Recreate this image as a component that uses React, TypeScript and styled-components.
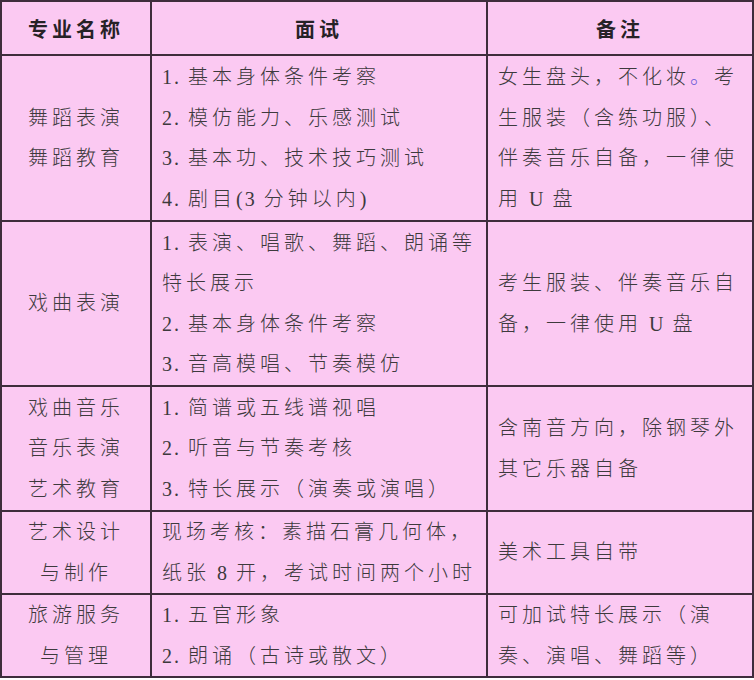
import React from "react";
import styled, { createGlobalStyle } from "styled-components";

const Global = createGlobalStyle`
  html, body { margin: 0; padding: 0; background: #ffffff; }
  body {
    font-family: "Liberation Serif", "Noto Sans CJK SC", serif;
  }
`;

const Table = styled.table`
  border-collapse: collapse;
  width: 752px;
  table-layout: fixed;
  background: #fbc9f2;
  border: 2px solid #3e2c3c;
  margin: 0;
`;

const HeadCell = styled.th`
  height: 52px;
  padding: 0;
  border: 2px solid #3e2c3c;
  font-family: "Liberation Serif", "Noto Sans CJK SC", serif;
  font-size: 20px;
  font-weight: 700;
  letter-spacing: 4px;
  color: #262226;
  text-align: center;
  vertical-align: middle;
`;

const Cell = styled.td<{ $center?: boolean; $h: number }>`
  height: ${(p) => p.$h}px;
  padding: 0 ${(p) => (p.$center ? "0" : "8px")} 0 ${(p) => (p.$center ? "0" : "10px")};
  border: 2px solid #3e2c3c;
  font-family: "Liberation Serif", "Noto Sans CJK SC", serif;
  font-size: 20px;
  font-weight: 300;
  letter-spacing: 4px;
  line-height: 40.5px;
  color: #3d3a3d;
  text-align: ${(p) => (p.$center ? "center" : "left")};
  vertical-align: middle;
  white-space: nowrap;
  overflow: hidden;
`;

const Line = styled.div`
  display: block;
`;

const Num = styled.span`
  letter-spacing: 2px;
`;

const Dot = styled.span`
  color: #6a5ad8;
`;

type Row = {
  h: number;
  name: string[];
  exam: React.ReactNode[];
  note: React.ReactNode[];
};

const rows: Row[] = [
  {
    h: 164,
    name: ["舞蹈表演", "舞蹈教育"],
    exam: [
      <><Num>1. </Num>基本身体条件考察</>,
      <><Num>2. </Num>模仿能力、乐感测试</>,
      <><Num>3. </Num>基本功、技术技巧测试</>,
      <><Num>4. </Num>剧目<Num>(3 </Num>分钟以内<Num>)</Num></>,
    ],
    note: [
      <>女生盘头，不化妆<Dot>。</Dot>考</>,
      "生服装（含练功服）、",
      "伴奏音乐自备，一律使",
      <>用<Num> U </Num>盘</>,
    ],
  },
  {
    h: 163,
    name: ["戏曲表演"],
    exam: [
      <><Num>1. </Num>表演、唱歌、舞蹈、朗诵等</>,
      "特长展示",
      <><Num>2. </Num>基本身体条件考察</>,
      <><Num>3. </Num>音高模唱、节奏模仿</>,
    ],
    note: ["考生服装、伴奏音乐自", <>备，一律使用<Num> U </Num>盘</>],
  },
  {
    h: 123,
    name: ["戏曲音乐", "音乐表演", "艺术教育"],
    exam: [
      <><Num>1. </Num>简谱或五线谱视唱</>,
      <><Num>2. </Num>听音与节奏考核</>,
      <><Num>3. </Num>特长展示（演奏或演唱）</>,
    ],
    note: ["含南音方向，除钢琴外", "其它乐器自备"],
  },
  {
    h: 81,
    name: ["艺术设计", "与制作"],
    exam: ["现场考核：素描石膏几何体，", <>纸张<Num> 8 </Num>开，考试时间两个小时</>],
    note: ["美术工具自带"],
  },
  {
    h: 81,
    name: ["旅游服务", "与管理"],
    exam: [<><Num>1. </Num>五官形象</>, <><Num>2. </Num>朗诵（古诗或散文）</>],
    note: ["可加试特长展示（演", "奏、演唱、舞蹈等）"],
  },
];

export default function App() {
  return (
    <>
      <Global />
      <Table>
        <colgroup>
          <col style={{ width: 150 }} />
          <col style={{ width: 336 }} />
          <col style={{ width: 266 }} />
        </colgroup>
        <thead>
          <tr>
            <HeadCell>专业名称</HeadCell>
            <HeadCell>面试</HeadCell>
            <HeadCell>备注</HeadCell>
          </tr>
        </thead>
        <tbody>
          {rows.map((r, i) => (
            <tr key={i}>
              <Cell $center $h={r.h}>
                {r.name.map((t, j) => (
                  <Line key={j}>{t}</Line>
                ))}
              </Cell>
              <Cell $h={r.h}>
                {r.exam.map((t, j) => (
                  <Line key={j}>{t}</Line>
                ))}
              </Cell>
              <Cell $h={r.h}>
                {r.note.map((t, j) => (
                  <Line key={j}>{t}</Line>
                ))}
              </Cell>
            </tr>
          ))}
        </tbody>
      </Table>
    </>
  );
}
